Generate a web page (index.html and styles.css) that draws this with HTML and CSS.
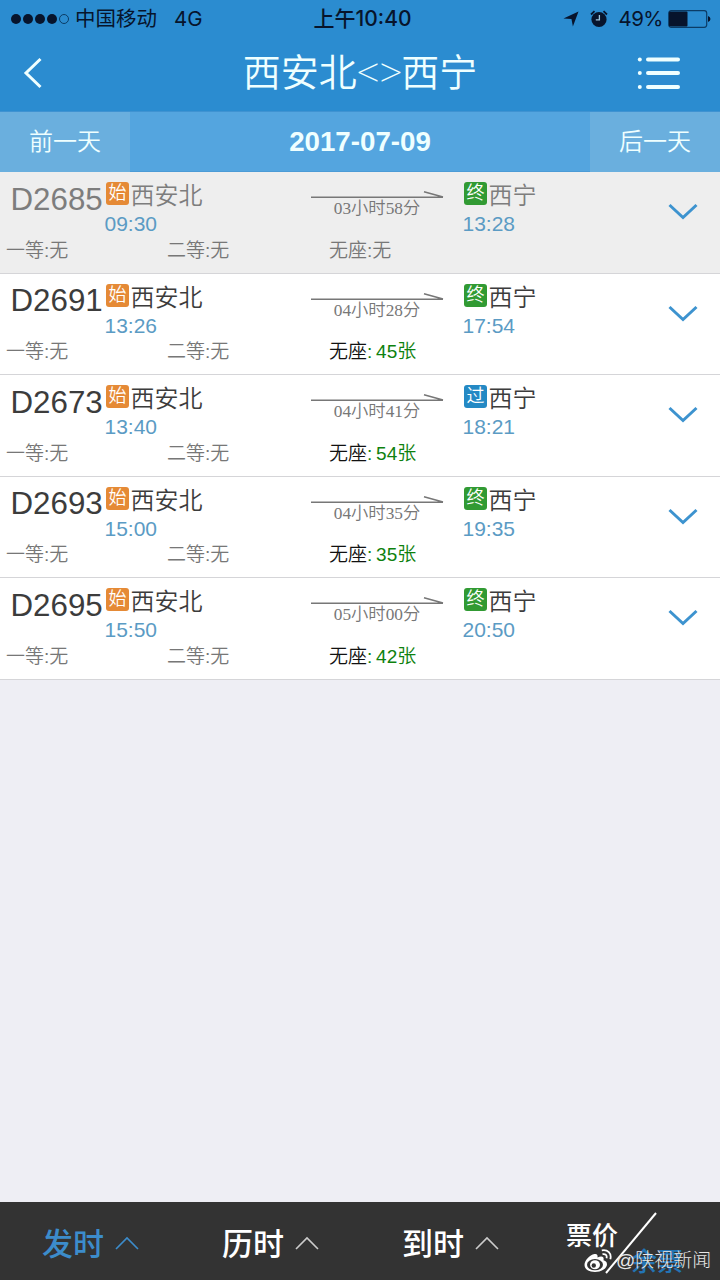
FILE: index.html
```
<!doctype html>
<html lang="zh-CN">
 <head>
  <meta charset="utf-8">
  <title>西安北&lt;&gt;西宁</title>
  <meta name="viewport" content="width=device-width, initial-scale=1">
  <link rel="stylesheet" href="styles.css">
 </head>
 <body>
  <svg class="defs">
   <symbol id="arrow" viewBox="0 0 134 10">
    <path d="M0 7.2H132M113 1.8L132 7" fill="none" stroke="currentColor" stroke-width="1.6"/>
   </symbol>
   <symbol id="down" viewBox="0 0 30 18">
    <path d="M1.5 2L15 14.5L28.500 2" fill="none" stroke="currentColor" stroke-width="3"/>
   </symbol>
   <symbol id="up" viewBox="0 0 24 14">
    <path d="M1 13L12 2L23 13" fill="none" stroke="currentColor" stroke-width="1.6"/>
   </symbol>
  </svg>
  <div class="status">
   <div class="carrier">
    <span class="signal"><i></i><i></i><i></i><i></i><i class="off"></i></span>
    <span>中国移动</span>
    <span class="net">4G</span>
   </div>
   <div class="clock">上午10:40</div>
   <div class="power">
    <svg class="loc" width="16" height="16" viewBox="0 0 17 17"><path d="M16.500 0.500L10.500 16.500L9 8.600L0.500 8Z"/></svg>
    <svg class="alarm" width="18" height="18" viewBox="0 0 18 18">
     <circle cx="9" cy="9.500" r="7.600"/>
     <path d="M1 4.500L4.500 1.200M17 4.500L13.500 1.200" stroke="#07142c" stroke-width="1.800"/>
     <path d="M9.400 5V9.800H5.800" fill="none" stroke="#9fc4dc" stroke-width="1.300"/>
    </svg>
    <span>49%</span>
    <svg class="battery" width="43" height="18" viewBox="0 0 43 18">
     <rect x="0.700" y="0.700" width="38" height="16.600" rx="2.500" fill="none" stroke="#0b3c66" stroke-width="1.200"/>
     <rect x="1" y="1.500" width="18.500" height="15" rx="1"/>
     <path d="M40 6Q42.500 7 42.500 9Q42.500 11 40 12Z"/>
    </svg>
   </div>
  </div>
  <header>
   <svg class="back" width="20" height="32" viewBox="0 0 20 32"><path d="M17.500 2L3 16L17.500 30" fill="none" stroke="#efffff" stroke-width="3"/></svg>
   <h1>西安北<span>&lt;&gt;</span>西宁</h1>
   <svg class="menu" width="44" height="34" viewBox="0 0 44 34">
    <g fill="#efffff"><circle cx="2.800" cy="3.500" r="2"/><circle cx="2.800" cy="17" r="2"/><circle cx="2.800" cy="31" r="2"/></g>
    <path d="M11 3.500H41M11 17H41M11 31H41" stroke="#efffff" stroke-width="4" stroke-linecap="round"/>
   </svg>
  </header>
  <nav class="days">
   <a>前一天</a>
   <strong>2017-07-09</strong>
   <a>后一天</a>
  </nav>
  <main>
   <section class="train gone">
    <div class="route">
     <h2>D2685</h2>
     <div class="stop"><p><b class="start">始</b>西安北</p><time>09:30</time></div>
     <div class="trip"><svg><use href="#arrow"/></svg><span>03小时58分</span></div>
     <div class="stop"><p><b class="end">终</b>西宁</p><time>13:28</time></div>
     <svg class="more"><use href="#down"/></svg>
    </div>
    <div class="seats"><span>一等:无</span><span>二等:无</span><span>无座:无</span></div>
   </section>
   <section class="train">
    <div class="route">
     <h2>D2691</h2>
     <div class="stop"><p><b class="start">始</b>西安北</p><time>13:26</time></div>
     <div class="trip"><svg><use href="#arrow"/></svg><span>04小时28分</span></div>
     <div class="stop"><p><b class="end">终</b>西宁</p><time>17:54</time></div>
     <svg class="more"><use href="#down"/></svg>
    </div>
    <div class="seats"><span>一等:无</span><span>二等:无</span><span class="left">无座<em>: 45张</em></span></div>
   </section>
   <section class="train">
    <div class="route">
     <h2>D2673</h2>
     <div class="stop"><p><b class="start">始</b>西安北</p><time>13:40</time></div>
     <div class="trip"><svg><use href="#arrow"/></svg><span>04小时41分</span></div>
     <div class="stop"><p><b class="pass">过</b>西宁</p><time>18:21</time></div>
     <svg class="more"><use href="#down"/></svg>
    </div>
    <div class="seats"><span>一等:无</span><span>二等:无</span><span class="left">无座<em>: 54张</em></span></div>
   </section>
   <section class="train">
    <div class="route">
     <h2>D2693</h2>
     <div class="stop"><p><b class="start">始</b>西安北</p><time>15:00</time></div>
     <div class="trip"><svg><use href="#arrow"/></svg><span>04小时35分</span></div>
     <div class="stop"><p><b class="end">终</b>西宁</p><time>19:35</time></div>
     <svg class="more"><use href="#down"/></svg>
    </div>
    <div class="seats"><span>一等:无</span><span>二等:无</span><span class="left">无座<em>: 35张</em></span></div>
   </section>
   <section class="train">
    <div class="route">
     <h2>D2695</h2>
     <div class="stop"><p><b class="start">始</b>西安北</p><time>15:50</time></div>
     <div class="trip"><svg><use href="#arrow"/></svg><span>05小时00分</span></div>
     <div class="stop"><p><b class="end">终</b>西宁</p><time>20:50</time></div>
     <svg class="more"><use href="#down"/></svg>
    </div>
    <div class="seats"><span>一等:无</span><span>二等:无</span><span class="left">无座<em>: 42张</em></span></div>
   </section>
  </main>
  <footer>
   <a class="on">发时<svg><use href="#up"/></svg></a>
   <a>历时<svg><use href="#up"/></svg></a>
   <a>到时<svg><use href="#up"/></svg></a>
   <div class="price">
    <span>票价</span>
    <svg class="slash" width="54" height="62" viewBox="0 0 54 62"><path d="M2 61L52 1" stroke="#fff" stroke-width="2"/></svg>
    <span class="rest">余票</span>
    <div class="mark">
     <svg width="28" height="24" viewBox="0 0 28 24">
      <path d="M10.500 5C5.500 6 0.500 11.500 0.500 16C0.500 20.500 5.500 23 11 23C18 23 23 19 23 15.200C23 12.800 21.200 11.800 19.500 11.300C20.500 8 18 6.500 13.500 8.500C14 6 13 4.500 10.500 5Z" fill="#fff"/>
      <ellipse cx="11" cy="15.700" rx="8" ry="5.600" fill="#333"/>
      <ellipse cx="11" cy="15.700" rx="5" ry="4.500" fill="#fff"/>
      <circle cx="9.800" cy="16.500" r="2.200" fill="#333"/>
      <path d="M18.500 5.200C21.500 4.500 23.300 6.500 22.500 9.200M17.800 1.300C23.500 0 28 4.500 26.300 10.300" fill="none" stroke="#fff" stroke-width="1.800"/>
     </svg>
     <span>@陕视新闻</span>
    </div>
   </div>
  </footer>
 </body>
</html>
```
FILE: styles.css
```
* {
 box-sizing: border-box;
}
body {
 margin: 0;
 height: 1280px;
 display: flex;
 flex-direction: column;
 overflow: hidden;
 background-color: #eeeef4;
 color: #3c3c3c;
 font-family: "Liberation Sans", "Noto Sans CJK SC", sans-serif;
 white-space: nowrap;
}
h1, h2, p {
 margin: 0;
 font-weight: normal;
}
svg {
 display: block;
 flex: none;
}
.defs {
 display: none;
}
.status {
 height: 36px;
 display: grid;
 grid-template-columns: 1fr auto 1fr;
 padding: 0 9px 0 11px;
 background-color: #2b8cd0;
 color: #07142c;
 font-family: Inter, "Noto Sans CJK SC", sans-serif;
 font-size: 20.5px;
 line-height: 37px;
}
.carrier, .power, .signal {
 display: flex;
 align-items: center;
}
.carrier {
 font-weight: 380;
}
.signal {
 gap: 2px;
 margin-right: 6px;
}
.signal i {
 width: 10px;
 height: 10px;
 border-radius: 50%;
 background-color: #07142c;
}
.signal .off {
 background: none;
 border: 1px solid #0b3c66;
}
.net {
 margin-left: 17px;
}
.clock {
 padding-left: 3px;
 font-size: 21px;
 font-weight: 500;
}
.power {
 justify-content: flex-end;
 fill: #07142c;
 font-weight: 380;
 letter-spacing: -0.5px;
}
.loc {
 margin-right: 11px;
}
.alarm {
 margin-right: 10px;
}
.battery {
 margin-left: 5px;
}
header {
 height: 76px;
 display: flex;
 justify-content: space-between;
 padding: 21px 39px 0 23px;
 background-color: #2b8cd0;
 border-bottom: 1px solid #3f93d2;
 color: #efffff;
}
.menu {
 margin-top: -1px;
}
h1 {
 margin: -15px 0 0 40px;
 font-family: "Noto Sans CJK SC", sans-serif;
 font-size: 38px;
 font-weight: 350;
 line-height: 56px;
}
h1 span {
 font-family: Roboto, sans-serif;
 font-size: 46px;
 font-weight: 100;
 letter-spacing: -1.5px;
 line-height: 50px;
 vertical-align: -2px;
}
.days {
 height: 60px;
 display: grid;
 grid-template-columns: 130px 1fr 130px;
 background-color: #54a5df;
 border-bottom: 1px solid #4c9bd6;
 color: #efffff;
 text-align: center;
 font-size: 24px;
 font-weight: 350;
 line-height: 60px;
}
.days a {
 background-color: #6aafde;
}
.days strong {
 font-size: 27.700px;
 font-weight: 700;
}
.train {
 height: 101.6px;
 background-color: #fff;
 border-bottom: 1.5px solid #d5d5d8;
}
.gone {
 background-color: #eee;
}
.route {
 height: 65px;
 display: grid;
 grid-template-columns: 94px 206px 152px 206px 30px;
 padding-left: 11px;
}
h2 {
 margin-left: -0.5px;
 padding-top: 9.500px;
 font-size: 31.300px;
 line-height: 36px;
}
.stop {
 margin-left: -1px;
}
.stop p {
 display: flex;
 align-items: center;
 height: 34px;
 padding-top: 14px;
 font-size: 24px;
 line-height: 34px;
 font-weight: 350;
}
.stop b {
 width: 23px;
 height: 23px;
 margin: -5px 1.500px 0 2px;
 border-radius: 3px;
 color: #fff;
 font-size: 18px;
 font-weight: 350;
 line-height: 22px;
 text-align: center;
}
.start {
 background-color: #e58a36;
}
.end {
 background-color: #319a33;
}
.pass {
 background-color: #2489c4;
}
time {
 display: block;
 padding: 5px 0 0 0.5px;
 color: #5b9bc4;
 font-size: 21px;
 line-height: 26px;
}
.trip {
 width: 134px;
 padding-top: 18px;
 color: #777;
 text-align: center;
 font-family: "Liberation Serif", "Noto Sans CJK SC", serif;
 font-size: 17.300px;
 font-weight: 350;
}
.trip svg {
 width: 134px;
 height: 10px;
}
.trip span {
 display: block;
 padding-right: 2px;
 line-height: 18px;
}
.more {
 width: 30px;
 height: 18px;
 margin: 31px 0 0 -1px;
 color: #3d93cf;
}
.seats {
 display: grid;
 grid-template-columns: 161px 162px 1fr;
 padding: 0.5px 0 0 6px;
 color: #777;
 font-size: 19px;
 font-weight: 350;
 line-height: 26px;
}
.left {
 color: #111;
}
.left em {
 color: #0e810e;
 font-style: normal;
 word-spacing: -1.500px;
}
.gone h2, .gone p {
 color: #7d7d7d;
}
.gone .start, .gone .end {
 color: #fff;
}
footer {
 height: 78px;
 display: grid;
 grid-template-columns: repeat(4, 180px);
 margin-top: auto;
 background-color: #333;
 color: #fff;
}
footer a {
 display: flex;
 align-items: center;
 padding: 0 0 0 42px;
 font-size: 31px;
 font-weight: 500;
}
footer a svg {
 width: 24px;
 height: 14px;
 margin: 4px 0 0 11px;
 color: #ccc;
}
footer .on, .on svg {
 color: #3c8ccb;
}
.price {
 position: relative;
 padding: 15px 0 0 26px;
 font-size: 26px;
 font-weight: 500;
 line-height: 38px;
}
/* the diagonal and the lower label overlap the upper one */
.slash {
 position: absolute;
 left: 64px;
 top: 10px;
}
.rest {
 position: absolute;
 left: 91px;
 top: 41px;
 color: #2374b4;
}
.mark {
 position: absolute;
 left: 44px;
 top: 45px;
 display: flex;
 align-items: center;
 gap: 4px;
 color: #e8e8e8;
 font-size: 19px;
 font-weight: 300;
 line-height: 26px;
}
.mark span {
 margin-top: 1px;
}
```
